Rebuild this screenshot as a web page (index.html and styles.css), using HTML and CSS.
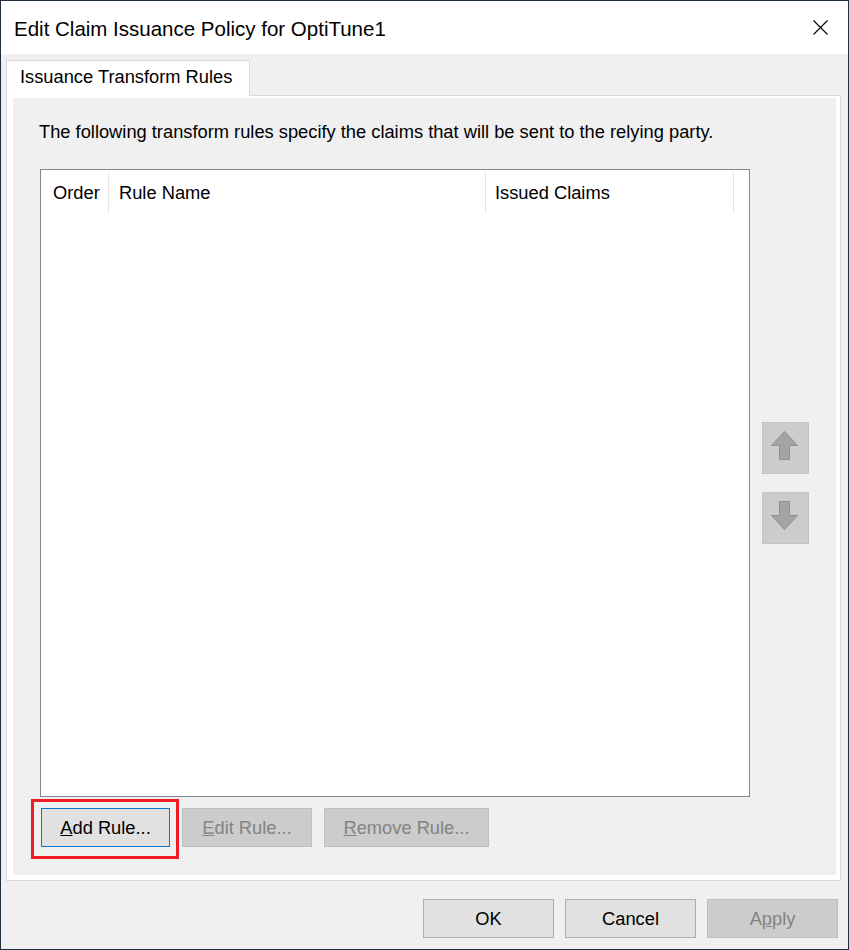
FILE: index.html
```html
<!DOCTYPE html>
<html>
<head>
<meta charset="utf-8">
<title>Edit Claim Issuance Policy</title>
<link rel="stylesheet" href="styles.css">
</head>
<body>
<div class="window">
  <div class="titlebar">
    <span class="title">Edit Claim Issuance Policy for OptiTune1</span>
    <svg class="close" width="15" height="15" viewBox="0 0 15 15"><path d="M0.5 0.5 L14.5 14.5 M14.5 0.5 L0.5 14.5" stroke="#000" stroke-width="1.1" fill="none"/></svg>
  </div>
  <div class="tabs">
    <div class="tab">Issuance Transform Rules</div>
    <div class="tab-fill"></div>
  </div>
  <div class="panel">
    <div class="page">
      <p class="desc">The following transform rules specify the claims that will be sent to the relying party.</p>
      <div class="list-row">
        <div class="list">
          <div class="list-head">
            <div class="col col-order">Order</div>
            <div class="col col-name">Rule Name</div>
            <div class="col col-claims">Issued Claims</div>
          </div>
        </div>
        <div class="move">
          <button class="arrow-btn" disabled><svg width="45" height="50" viewBox="0 0 45 50"><path d="M21.5 8.5 L34.5 22.5 L26.5 22.5 L26.5 36.5 L16.5 36.5 L16.5 22.5 L8.5 22.5 Z" fill="#a4a4a4" stroke="#8f8f8f" stroke-width="1"/></svg></button>
          <button class="arrow-btn" disabled><svg width="45" height="50" viewBox="0 0 45 50"><path d="M16.5 8.5 L26.5 8.5 L26.5 22.5 L34.5 22.5 L21.5 36.5 L8.5 22.5 L16.5 22.5 Z" fill="#a4a4a4" stroke="#8f8f8f" stroke-width="1"/></svg></button>
        </div>
      </div>
      <div class="rule-buttons">
        <span class="hl"><button class="btn btn-add btn-focus"><u>A</u>dd Rule...</button></span>
        <button class="btn btn-edit" disabled><u>E</u>dit Rule...</button>
        <button class="btn btn-remove" disabled><u>R</u>emove Rule...</button>
      </div>
    </div>
  </div>
  <div class="footer">
    <button class="btn btn-foot">OK</button>
    <button class="btn btn-foot">Cancel</button>
    <button class="btn btn-foot" disabled>A<u>p</u>ply</button>
  </div>
</div>
</body>
</html>
```
FILE: styles.css
```css
html, body {
  margin: 0;
  padding: 0;
  background: #f0f0f0;
}
body {
  font-family: "Liberation Sans", Arial, sans-serif;
  color: #000;
}
.window {
  width: 849px;
  height: 950px;
  box-sizing: border-box;
  border: 1px solid #1f2d3d;
  background: #f0f0f0;
  display: flex;
  flex-direction: column;
}
.titlebar {
  height: 53px;
  box-sizing: border-box;
  background: #fff;
  padding: 16px 20px 0 13px;
  display: flex;
  justify-content: space-between;
  align-items: flex-start;
}
.title {
  font-size: 20.5px;
  line-height: 24px;
}
.close {
  margin-top: 3px;
  display: block;
}
.tabs {
  margin: 6px 7px 0 5px;
  height: 36px;
  display: flex;
}
.tab {
  width: 244px;
  height: 36px;
  box-sizing: border-box;
  border: 1px solid #d9d9d9;
  border-bottom: none;
  background: #fff;
  padding: 5px 0 0 13px;
  font-size: 18.3px;
  line-height: 21px;
}
.tab-fill {
  flex: 1;
  box-sizing: border-box;
  height: 36px;
  border-bottom: 1px solid #d9d9d9;
}
.panel {
  margin: 0 7px 0 5px;
  height: 785px;
  box-sizing: border-box;
  border: 1px solid #d9d9d9;
  border-top: none;
  background: #fff;
  padding: 2px 4px 5px 6px;
  display: flex;
}
.page {
  flex: 1;
  background: #f0f0f0;
  padding: 23px 0 0 27px;
  display: flex;
  flex-direction: column;
}
.desc {
  margin: 0 0 0 -1px;
  font-size: 18.3px;
  line-height: 21px;
  white-space: nowrap;
}
.list-row {
  margin-top: 27px;
  display: flex;
}
.list {
  width: 710px;
  height: 628px;
  box-sizing: border-box;
  border: 1px solid #828790;
  background: #fff;
}
.list-head {
  display: flex;
  padding-top: 2px;
}
.col {
  height: 41px;
  box-sizing: border-box;
  border-right: 1px solid #e5e5e5;
  padding-top: 10px;
  font-size: 18.3px;
  line-height: 21px;
  white-space: nowrap;
}
.col-order { width: 68px; padding-left: 12px; }
.col-name { width: 377px; padding-left: 10px; }
.col-claims { width: 248px; padding-left: 9px; }
.move {
  margin-left: 12px;
  padding-top: 253px;
  display: flex;
  flex-direction: column;
  gap: 18px;
}
.arrow-btn {
  width: 47px;
  height: 52px;
  box-sizing: border-box;
  padding: 0;
  margin: 0;
  border: 1px solid #c2c2c2;
  background: #cccccc;
}
.arrow-btn svg {
  display: block;
}
.rule-buttons {
  margin-top: 11px;
  padding-left: 1px;
  display: flex;
  gap: 12px;
}
.btn {
  height: 39px;
  box-sizing: border-box;
  margin: 0;
  padding: 0;
  font-family: "Liberation Sans", Arial, sans-serif;
  font-size: 18.3px;
  line-height: 21px;
  text-align: center;
  color: #000;
  background: #e1e1e1;
  border: 1px solid #adadad;
  border-radius: 0;
  white-space: nowrap;
}
.btn:disabled {
  background: #cccccc;
  border-color: #bfbfbf;
  color: #838383;
}
.btn-focus {
  border-color: #0078d7;
}
.btn-add { width: 129px; }
.btn-edit { width: 130px; }
.btn-remove { width: 165px; }
.hl {
  position: relative;
  display: flex;
}
.hl::after {
  content: "";
  position: absolute;
  left: -10px;
  top: -9px;
  width: 148px;
  height: 60px;
  box-sizing: border-box;
  border: 3px solid #ed1c24;
  pointer-events: none;
}
.footer {
  display: flex;
  justify-content: flex-end;
  gap: 11px;
  padding: 18px 10px 0 0;
}
.btn-foot { width: 131px; }
```
